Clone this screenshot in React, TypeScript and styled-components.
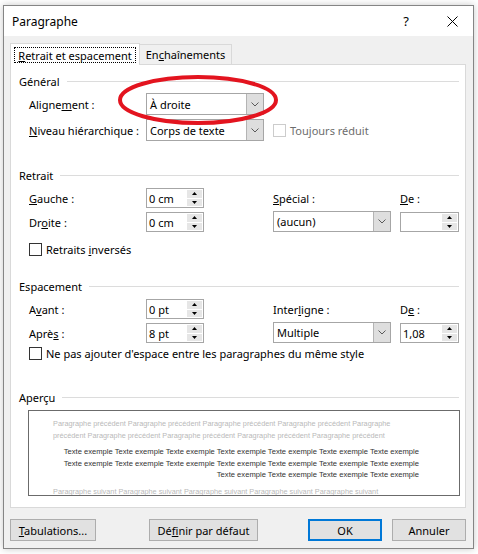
import React from 'react';
import styled, { createGlobalStyle } from 'styled-components';

const GlobalStyle = createGlobalStyle`
  html, body {
    margin: 0;
    padding: 0;
    background: #ffffff;
  }
  body {
    font-family: "Noto Sans", "Open Sans", sans-serif;
    font-size: 11px;
    color: #000;
  }
`;

const Screen = styled.div`
  width: 478px;
  height: 554px;
  padding: 5px 0 0 3px;
  box-sizing: border-box;
`;

const Window = styled.div`
  width: 471px;
  height: 544px;
  box-sizing: border-box;
  border: 1px solid #858585;
  background: #f0f0f0;
  box-shadow: 0 0 7px rgba(0, 0, 0, 0.22);
  display: flex;
  flex-direction: column;
`;

const TitleBar = styled.div`
  height: 30px;
  flex-shrink: 0;
  background: #fff;
  display: flex;
  align-items: center;
  padding-left: 8px;
  font-size: 12px;
`;

const TitleText = styled.div`
  flex: 1;
`;

const TitleButton = styled.div<{ $w: number }>`
  width: ${p => p.$w}px;
  height: 30px;
  display: flex;
  align-items: center;
  justify-content: center;
  font-size: 13px;
`;

const Body = styled.div`
  flex: 1;
  display: flex;
  flex-direction: column;
  padding: 7px 7px 0 6px;
`;

const TabRow = styled.div`
  display: flex;
  align-items: flex-end;
  height: 22px;
  margin-bottom: -1px;
  position: relative;
  z-index: 2;
`;

const Tab = styled.div<{ $active?: boolean; $w: number }>`
  width: ${p => p.$w}px;
  height: ${p => (p.$active ? 22 : 20)}px;
  margin-bottom: ${p => (p.$active ? 0 : 1)}px;
  box-sizing: border-box;
  border: 1px solid #d9d9d9;
  border-bottom: none;
  border-left: ${p => (p.$active ? '1px solid #d9d9d9' : 'none')};
  background: ${p => (p.$active ? '#fff' : '#f0f0f0')};
  display: flex;
  align-items: ${p => (p.$active ? 'flex-start' : 'center')};
  justify-content: center;
  padding: ${p => (p.$active ? '3px 3px 0' : '0')};
`;

const FocusRect = styled.div`
  width: 100%;
  height: 16px;
  box-sizing: border-box;
  border: 1px dotted #000;
  display: flex;
  align-items: center;
  justify-content: center;
`;

const Panel = styled.div`
  position: relative;
  height: 444px;
  box-sizing: border-box;
  border: 1px solid #d9d9d9;
  background: #fff;
  padding: 8px 6px 0 8px;
`;

const GroupHeader = styled.div<{ $top: number }>`
  display: flex;
  align-items: center;
  gap: 7px;
  height: 16px;
  margin-top: ${p => p.$top}px;
`;

const HeaderRule = styled.div`
  flex: 1;
  height: 1px;
  background: #dcdcdc;
`;

const FieldGrid = styled.div<{ $rows: string; $top: number }>`
  display: grid;
  grid-template-columns: 117px 127px 127px auto;
  grid-template-rows: ${p => p.$rows};
  row-gap: 4px;
  align-items: center;
  margin: ${p => p.$top}px 0 0 10px;
`;

const Label = styled.div<{ $disabled?: boolean }>`
  white-space: nowrap;
  color: ${p => (p.$disabled ? '#6d6d6d' : '#000')};
`;

const Key = styled.span`
  text-decoration: underline;
  text-underline-offset: 1px;
`;

const SelectBox = styled.div<{ $h: number; $lift?: boolean }>`
  width: 118px;
  height: ${p => p.$h}px;
  margin-top: ${p => (p.$lift ? -1 : 0)}px;
  box-sizing: border-box;
  border: 1px solid #a6a6a6;
  background: #fff;
  display: flex;
  align-self: start;
`;

const SelectValue = styled.div`
  flex: 1;
  display: flex;
  align-items: center;
  padding-left: 3px;
  white-space: nowrap;
`;

const SelectArrow = styled.div`
  width: 16px;
  background: #dedede;
  border-left: 1px solid #b4b4b4;
  display: flex;
  align-items: center;
  justify-content: center;
`;

const SpinBox = styled.div<{ $w: number }>`
  width: ${p => p.$w}px;
  height: 20px;
  box-sizing: border-box;
  border: 1px solid #a6a6a6;
  background: #fff;
  display: flex;
  align-self: start;
`;

const SpinValue = styled.div`
  flex: 1;
  display: flex;
  align-items: center;
  padding-left: 2px;
`;

const SpinButtons = styled.div`
  width: 15px;
  margin: 1px 1px 1px 0;
  display: flex;
  flex-direction: column;
  gap: 1px;
  background: #fff;
`;

const SpinHalf = styled.div`
  flex: 1;
  background: #e6e6e6;
  display: flex;
  align-items: center;
  justify-content: center;
`;

const CheckRow = styled.div<{ $top?: number; $indent?: number }>`
  display: flex;
  align-items: center;
  gap: 4px;
  height: 13px;
  margin: ${p => p.$top ?? 0}px 0 0 ${p => p.$indent ?? 0}px;
  white-space: nowrap;
`;

const CheckBox = styled.span<{ $disabled?: boolean }>`
  width: 13px;
  height: 13px;
  box-sizing: border-box;
  border: 1px solid ${p => (p.$disabled ? '#cccccc' : '#333')};
  background: #fff;
  flex-shrink: 0;
`;

const Preview = styled.div`
  margin: 5px 0 0 9px;
  width: 432px;
  height: 86px;
  box-sizing: border-box;
  border: 1px solid #6b6b6b;
  background: #fff;
  overflow: hidden;
  padding: 7px 0 0 24px;
  font-family: "Liberation Sans", Arial, sans-serif;
  line-height: 11.5px;
`;

const PreviewPara = styled.div<{ $sample?: boolean }>`
  width: 366px;
  white-space: nowrap;
  font-size: ${p => (p.$sample ? 7.62 : 7.32)}px;
  color: ${p => (p.$sample ? '#333' : '#b9b9b9')};
  text-align: ${p => (p.$sample ? 'right' : 'left')};
  margin-bottom: 5px;
`;

const Highlight = styled.svg`
  position: absolute;
  left: 107px;
  top: 10px;
  pointer-events: none;
`;

const ButtonRow = styled.div`
  display: flex;
  margin-top: 11px;
`;

const Button = styled.div<{ $w: number; $gap?: number; $push?: boolean; $default?: boolean }>`
  width: ${p => p.$w}px;
  height: 22px;
  box-sizing: border-box;
  margin-left: ${p => (p.$push ? 'auto' : `${p.$gap ?? 0}px`)};
  border: ${p => (p.$default ? '2px solid #0078d7' : '1px solid #adadad')};
  background: #e1e1e1;
  display: flex;
  align-items: center;
  justify-content: center;
  white-space: nowrap;
`;

const Chevron = () => (
  <svg width="8" height="5" viewBox="0 0 8 5">
    <polyline points="0.5,0.5 4,4 7.5,0.5" fill="none" stroke="#5a5a5a" strokeWidth="1" />
  </svg>
);

const Triangle = ({ up }: { up?: boolean }) => (
  <svg width="5" height="3" viewBox="0 0 5 3">
    <polygon points={up ? '0,3 2.5,0 5,3' : '0,0 2.5,3 5,0'} fill="#000" />
  </svg>
);

const Select = ({ value, h = 22, lift }: { value: string; h?: number; lift?: boolean }) => (
  <SelectBox $h={h} $lift={lift}>
    <SelectValue>{value}</SelectValue>
    <SelectArrow>
      <Chevron />
    </SelectArrow>
  </SelectBox>
);

const Spin = ({ value, w = 58 }: { value: string; w?: number }) => (
  <SpinBox $w={w}>
    <SpinValue>{value}</SpinValue>
    <SpinButtons>
      <SpinHalf>
        <Triangle up />
      </SpinHalf>
      <SpinHalf>
        <Triangle />
      </SpinHalf>
    </SpinButtons>
  </SpinBox>
);

const prevLines = [
  'Paragraphe précédent Paragraphe précédent Paragraphe précédent Paragraphe précédent Paragraphe',
  'précédent Paragraphe précédent Paragraphe précédent Paragraphe précédent Paragraphe précédent',
];

const sample = (n: number) => Array(n).fill('Texte exemple').join(' ');

export default function App() {
  return (
    <>
      <GlobalStyle />
      <Screen>
        <Window>
          <TitleBar>
            <TitleText>Paragraphe</TitleText>
            <TitleButton $w={50}>?</TitleButton>
            <TitleButton $w={42}>
              <svg width="11" height="11" viewBox="0 0 11 11">
                <path d="M0.5 0.5 L10.5 10.5 M10.5 0.5 L0.5 10.5" stroke="#000" strokeWidth="1" />
              </svg>
            </TitleButton>
          </TitleBar>

          <Body>
            <TabRow>
              <Tab $active $w={130}>
                <FocusRect>
                  <span>
                    <Key>R</Key>etrait et espacement
                  </span>
                </FocusRect>
              </Tab>
              <Tab $w={92}>
                <span>
                  En<Key>c</Key>haînements
                </span>
              </Tab>
            </TabRow>

            <Panel>
              <GroupHeader $top={0}>
                Général
                <HeaderRule />
              </GroupHeader>
              <FieldGrid $rows="22px 22px" $top={4}>
                <Label>
                  Aligne<Key>m</Key>ent :
                </Label>
                <Select value="À droite" />
                <div />
                <div />
                <Label>
                  <Key>N</Key>iveau hiérarchique :
                </Label>
                <Select value="Corps de texte" />
                <CheckRow>
                  <CheckBox $disabled />
                  <Label $disabled>Toujours réduit</Label>
                </CheckRow>
                <div />
              </FieldGrid>

              <GroupHeader $top={26}>
                Retrait
                <HeaderRule />
              </GroupHeader>
              <FieldGrid $rows="20px 20px" $top={5}>
                <Label>
                  <Key>G</Key>auche :
                </Label>
                <Spin value="0 cm" />
                <Label>
                  <Key>S</Key>pécial :
                </Label>
                <Label>
                  <Key>D</Key>e :
                </Label>
                <Label>
                  Dr<Key>o</Key>ite :
                </Label>
                <Spin value="0 cm" />
                <Select value="(aucun)" h={21} lift />
                <Spin value="" w={59} />
              </FieldGrid>
              <CheckRow $top={11} $indent={10}>
                <CheckBox />
                <Label>
                  Retraits <Key>i</Key>nversés
                </Label>
              </CheckRow>

              <GroupHeader $top={22}>
                Espacement
                <HeaderRule />
              </GroupHeader>
              <FieldGrid $rows="20px 20px" $top={5}>
                <Label>
                  A<Key>v</Key>ant :
                </Label>
                <Spin value="0 pt" />
                <Label>
                  Inter<Key>l</Key>igne :
                </Label>
                <Label>
                  D<Key>e</Key> :
                </Label>
                <Label>
                  Aprè<Key>s</Key> :
                </Label>
                <Spin value="8 pt" />
                <Select value="Multiple" h={21} lift />
                <Spin value="1,08" w={59} />
              </FieldGrid>
              <CheckRow $top={4} $indent={10}>
                <CheckBox />
                <Label>
                  Ne pas a<Key>j</Key>outer d'espace entre les paragraphes du même style
                </Label>
              </CheckRow>

              <GroupHeader $top={29}>
                Aperçu
                <HeaderRule />
              </GroupHeader>
              <Preview>
                <PreviewPara>
                  {prevLines.map(l => (
                    <div key={l}>{l}</div>
                  ))}
                </PreviewPara>
                <PreviewPara $sample>
                  <div>{sample(7)}</div>
                  <div>{sample(7)}</div>
                  <div>{sample(4)}</div>
                </PreviewPara>
                <PreviewPara>
                  <div>{Array(5).fill('Paragraphe suivant').join(' ')}</div>
                </PreviewPara>
              </Preview>

              <Highlight width="160" height="50" viewBox="0 0 160 50">
                <ellipse cx="80" cy="25" rx="78" ry="23" fill="none" stroke="#e3141f" strokeWidth="4" />
              </Highlight>
            </Panel>

            <ButtonRow>
              <Button $w={86}>
                <span>
                  <Key>T</Key>abulations...
                </span>
              </Button>
              <Button $w={109} $gap={53}>
                <span>
                  Dé<Key>f</Key>inir par défaut
                </span>
              </Button>
              <Button $w={74} $push $default>
                OK
              </Button>
              <Button $w={74} $gap={10}>
                Annuler
              </Button>
            </ButtonRow>
          </Body>
        </Window>
      </Screen>
    </>
  );
}
